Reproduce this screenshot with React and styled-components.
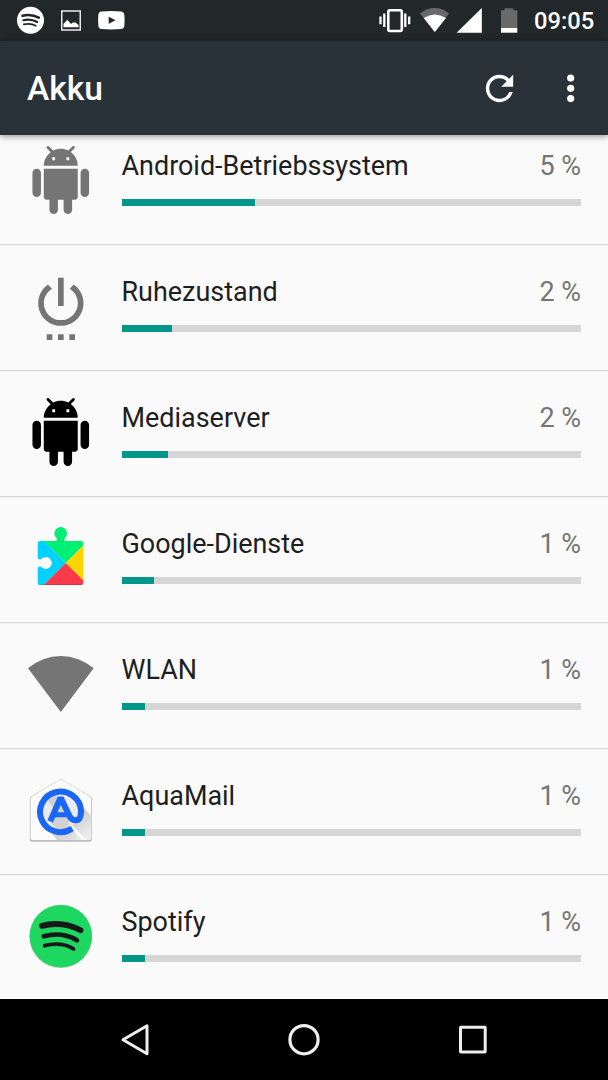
import React from 'react'
import styled, { createGlobalStyle } from 'styled-components';

const GlobalStyle = createGlobalStyle`
  body {
    margin: 0;
    background: #000;
    font-family: Roboto, "Liberation Sans", sans-serif;
  }
`;
const Screen = styled.div`
  display: flex;
  flex-direction: column;
  width: 608px;
  height: 1080px;
  overflow: hidden;
  background: #fafafa;
`;
const StatusBar = styled.div`
  display: flex;
  align-items: center;
  flex: none;
  height: 41px;
  padding: 0 14px 0 16px;
  box-sizing: border-box;
  background: #22272a;
`;
const StatusGroup = styled.div`
  display: flex;
  align-items: center;
  gap: ${props => props.gap};
`;
const Spacer = styled.div`
  flex: 1;
`;
const Icon = styled.svg`
  display: block;
  flex: none;
`;
const Clock = styled.div`
  width: 60px;
  margin-left: 16px;
  padding-top: 1px;
  color: #fff;
  font-size: 23.7px;
  font-weight: 500;
  line-height: 41px;
  white-space: nowrap;
`;
const AppBar = styled.div`
  position: relative;
  z-index: 1;
  display: flex;
  align-items: center;
  flex: none;
  height: 94px;
  padding: 0 17px 0 27px;
  box-sizing: border-box;
  background: #283238;
  box-shadow: 0 1px 7px rgba(0, 0, 0, 0.45);
`;
const Title = styled.div`
  flex: 1;
  color: #fff;
  font-size: 33.6px;
  font-weight: 500;
`;
const Actions = styled.div`
  display: flex;
  gap: 30px;
`;
const ListWindow = styled.div`
  flex: 1;
  min-height: 0;
  overflow: hidden;
`;
const List = styled.div`
  margin-top: -16px;
`;
const Row = styled.div`
  display: flex;
  height: 126px;
  padding-right: 27px;
  box-sizing: border-box;
  border-bottom: 1px solid #d6d6d6;
  box-shadow: 0 1px 0 #efefef;
`;
const Info = styled.div`
  flex: 1;
  padding-top: 28px;
`;
const Labels = styled.div`
  display: flex;
  justify-content: space-between;
  height: 52px;
  line-height: 38px;
  font-size: 26.95px;
`;
const Name = styled.div`
  color: #1e1e1e;
`;
const Percent = styled.div`
  color: #757575;
`;
const Track = styled.div`
  height: 7px;
  background: #d6d6d6;
`;
const Fill = styled.div`
  height: 100%;
  background: #009688;
`;
const NavBar = styled.div`
  display: grid;
  grid-template-columns: repeat(3, 169px);
  justify-content: center;
  justify-items: center;
  align-items: center;
  flex: none;
  height: 81px;
  background: #000;
`;

const RowIcon = ({ children }) => (
  <Icon width="121.5" height="124" viewBox="0 0 121.5 124">{children}</Icon>
);

const AndroidIcon = ({ color }) => (
  <RowIcon>
    <path
      transform="translate(26.8 27) scale(2.83)"
      fill={color}
      d="M6 18c0 .55.45 1 1 1h1v3.5c0 .83.67 1.5 1.5 1.5s1.5-.67 1.5-1.5V19h2v3.5c0 .83.67 1.5 1.5 1.5s1.5-.67 1.5-1.5V19h1c.55 0 1-.45 1-1V8H6v10zM3.5 8C2.67 8 2 8.67 2 9.5v7c0 .83.67 1.5 1.5 1.5S5 17.33 5 16.5v-7C5 8.67 4.33 8 3.5 8zm17 0c-.83 0-1.5.67-1.5 1.5v7c0 .83.67 1.5 1.5 1.5s1.5-.67 1.5-1.5v-7c0-.83-.67-1.5-1.5-1.5zm-4.97-5.84l1.3-1.3c.2-.2.2-.51 0-.71-.2-.2-.51-.2-.71 0l-1.48 1.48C13.85 1.23 12.95 1 12 1c-.96 0-1.86.23-2.66.63L7.85.15c-.2-.2-.51-.2-.71 0-.2.2-.2.51 0 .71l1.31 1.31C6.97 3.26 6 5.01 6 7h12c0-1.99-.97-3.75-2.47-4.84zM10 5H9V4h1v1zm5 0h-1V4h1v1z"
    />
  </RowIcon>
);

const PowerIcon = () => (
  <RowIcon>
    <path
      transform="translate(26.9 27) scale(2.83)"
      fill="#757575"
      d="M7 24h2v-2H7v2zm4 0h2v-2h-2v2zm2-22h-2v10h2V2zm3.56 2.44l-1.45 1.45C16.84 6.94 18 8.83 18 11c0 3.31-2.69 6-6 6s-6-2.69-6-6c0-2.17 1.16-4.06 2.88-5.12L7.44 4.44C5.36 5.88 4 8.28 4 11c0 4.42 3.58 8 8 8s8-3.58 8-8c0-2.72-1.36-5.12-3.44-6.56zM15 24h2v-2h-2v2z"
    />
  </RowIcon>
);

const PlayServicesIcon = () => (
  <RowIcon>
    <defs>
      <clipPath id="puzzle">
        <path d="M40.2 44H55.5Q58 43.6 56.6 41.2A6.3 6.3 0 1 1 64.8 41.2Q63.4 43.6 65.9 44H80.8Q83.4 44 83.4 46.5V85.5Q83.4 88 80.8 88H40.2Q37.7 88 37.7 85.500V71.5Q37.8 69.6 40 69.6Q41 69.7 42 70.6A6 6 0 1 0 42 61.4Q41 62.3 40 62.4Q37.8 62.4 37.7 60.5V46.5Q37.7 44 40.2 44Z" />
      </clipPath>
    </defs>
    <g clipPath="url(#puzzle)">
      <path fill="#00f076" d="M43.7 44L50 28H72L90 41.7 65.7 66Z" />
      <path fill="#00d2ff" d="M36 36.3L65.7 66 36 95.7Z" />
      <path fill="#ffd500" d="M65.7 66L84 47.7V84.3Z" />
      <path fill="#f93a4a" d="M65.7 66L88.7 89H42.7Z" />
      <path fill="#000" opacity="0.15" d="M37 87.3H84V88H37Z" />
    </g>
  </RowIcon>
);

const WlanIcon = () => (
  <RowIcon>
    <path fill="#757575" d="M60.8 89L28 45.3A50 50 0 0 1 93.6 45.3Z" />
  </RowIcon>
);

const AquaMailIcon = () => (
  <RowIcon>
    <defs>
      <linearGradient id="fold" gradientUnits="userSpaceOnUse" x1="54" y1="56" x2="84" y2="90">
        <stop offset="0" stopColor="#cfcfcf" />
        <stop offset="0.6" stopColor="#d2d2d2" />
        <stop offset="1" stopColor="#ededed" />
      </linearGradient>
    </defs>
    <path
      fill="#bdbdbd"
      d="M59.3 30.4Q60.8 29.6 62.3 30.4L90.2 47.2Q91.9 48.3 91.9 50.3V90.5Q91.9 92.8 89.6 92.8H32Q29.8 92.8 29.8 90.5V50.3Q29.8 48.3 31.5 47.2Z"
    />
    <path
      fill="#fcfcfc"
      d="M59.5 30.8Q60.8 30.1 62.1 30.8L89.6 47.6Q91.1 48.5 91.1 50.3V89.3Q91.1 91 89.4 91H32.2Q30.6 91 30.6 89.3V50.3Q30.6 48.5 32.1 47.6Z"
    />
    <path fill="url(#fold)" d="M80 54L91.1 67V89.3Q91.1 91 89.4 91H86.6L72 76Z" />
    <path fill="url(#fold)" d="M47 79L60 72 71 79 82 91H57Z" />
    <circle cx="60.5" cy="62.5" r="18.500" fill="#ebebeb" />
    <path fill="url(#fold)" d="M47 50L53 45.500 60.600 50 70 71 67 80 60 81.500 50.500 74 57 64Z" />
    <path
      fill="none"
      stroke="#1a66f5"
      strokeWidth="6"
      d="M72.2 79.6A20.500 20.300 0 1 1 81 61.500C81 67.500 80 71.200 76 71.200C72.600 71.200 70.800 69.800 69.600 67.200L61.600 50.600H59.800L50.200 72.400"
    />
    <path fill="#1a66f5" d="M55 63.300H67L69 68.200H53Z" />
  </RowIcon>
);

const SpotifyIcon = () => (
  <RowIcon>
    <circle cx="60.8" cy="61.7" r="31.4" fill="#b9c7bd" />
    <circle cx="60.8" cy="61.1" r="31.2" fill="#1ed760" />
    <g fill="none" stroke="#15191a" strokeLinecap="round">
      <path strokeWidth="5.800" d="M42 50.9C55 47.2 69.5 49 80.5 55.3" />
      <path strokeWidth="4.800" d="M43.9 61.2C55 58 67.500 59.5 76.9 65.2" />
      <path strokeWidth="3.8" d="M44.7 70.7C54.5 68.3 65.5 69 73.5 73.9" />
    </g>
  </RowIcon>
);

const rows = [
  { name: 'Android-Betriebssystem', percent: '5 %', fill: 29, icon: <AndroidIcon color="#757575" /> },
  { name: 'Ruhezustand', percent: '2 %', fill: 11, icon: <PowerIcon /> },
  { name: 'Mediaserver', percent: '2 %', fill: 10.1, icon: <AndroidIcon color="#000" /> },
  { name: 'Google-Dienste', percent: '1 %', fill: 7.05, icon: <PlayServicesIcon /> },
  { name: 'WLAN', percent: '1 %', fill: 5.05, icon: <WlanIcon /> },
  { name: 'AquaMail', percent: '1 %', fill: 5.05, icon: <AquaMailIcon /> },
  { name: 'Spotify', percent: '1 %', fill: 5.05, icon: <SpotifyIcon /> },
];

const Notifications = () => (
  <StatusGroup gap="16px">
    <Icon width="29" height="41" viewBox="0 0 29 41">
      <circle cx="14.5" cy="20.3" r="13.5" fill="#fff" />
      <g fill="none" stroke="#22272a" strokeLinecap="round">
        <path strokeWidth="2.5" d="M6.5 15.8C12 14.3 18 15 22.8 17.7" />
        <path strokeWidth="2.1" d="M7.3 20.3C12 19 17 19.6 21.2 22" />
        <path strokeWidth="1.7" d="M7.8 24.4C12 23.4 16.4 23.7 19.8 25.8" />
      </g>
    </Icon>
    <Icon width="20" height="41" viewBox="0 0 20 41">
      <path fill="none" stroke="#e8e9e9" strokeWidth="1.5" d="M.75 10.9H19.25V29.9H.75Z" />
      <path fill="#fff" d="M2.5 27.3V24L6.3 19.8 10 24 12 22.5H14.5L17.5 25V27.3Z" />
    </Icon>
    <Icon width="30" height="41" viewBox="0 0 30 41">
      <path
        fill="#fff"
        d="M4.5 11.4Q14.2 10.6 24 11.4Q27 11.7 27.4 15Q27.8 20.3 27.4 25.6Q27 28.8 24 29.1Q14.2 29.9 4.5 29.1Q1.5 28.8 1.3 25.6Q.9 20.3 1.3 15Q1.5 11.7 4.5 11.4Z"
      />
      <path fill="#22272a" d="M11.7 16.7V23.8L18.6 20.2Z" />
    </Icon>
  </StatusGroup>
);

const SystemIcons = () => (
  <StatusGroup gap="7px">
    <Icon width="33" height="41" viewBox="0 0 33 41">
      <rect x="9.3" y="10.2" width="13.500" height="20.800" rx="1.5" fill="none" stroke="#fff" strokeWidth="2.6" />
      <path fill="none" stroke="#fff" strokeWidth="2.3" d="M1.5 16.5V24.2M5.3 13.5V27M26.300 13.5V27M30.200 16.5V24.2" />
    </Icon>
    <Icon width="30" height="41" viewBox="0 0 30 41">
      <path fill="#67696b" d="M15.800 32L1 13.5Q15.800 2.7 30 13.5Z" />
      <path fill="#fff" d="M15.800 32L4.800 18Q15.800 10.8 27 18Z" />
    </Icon>
    <Icon width="26" height="41" viewBox="0 0 26 41">
      <path fill="#fff" d="M.6 32.8L25.8 8V32.8Z" />
    </Icon>
    <Icon width="29" height="41" viewBox="0 0 29 41">
      <path fill="#67696b" d="M12 10.3H15.5V8.300H24.300V10.3H28.3V28H12Z" />
      <path fill="#fff" d="M12 28H28.300V32.700H12Z" />
    </Icon>
  </StatusGroup>
);

const App = () => {
  return (
    <Screen>
      <GlobalStyle />
      <StatusBar>
        <Notifications />
        <Spacer />
        <SystemIcons />
        <Clock>09:05</Clock>
      </StatusBar>
      <AppBar>
        <Title>Akku</Title>
        <Actions>
          <Icon width="41" height="41" viewBox="0 0 24 24">
            <path
              fill="#fff"
              d="M17.65 6.35C16.2 4.9 14.21 4 12 4c-4.42 0-7.99 3.58-7.99 8s3.57 8 7.99 8c3.73 0 6.84-2.55 7.73-6h-2.08c-.82 2.33-3.04 4-5.65 4-3.31 0-6-2.69-6-6s2.69-6 6-6c1.66 0 3.14.69 4.22 1.78L13 11h7V4l-2.35 2.35z"
            />
          </Icon>
          <Icon width="41" height="41" viewBox="0 0 24 24" fill="#fff">
            <circle cx="12.1" cy="5.9" r="2.1" />
            <circle cx="12.1" cy="11.9" r="2.1" />
            <circle cx="12.1" cy="17.9" r="2.1" />
          </Icon>
        </Actions>
      </AppBar>
      <ListWindow>
        <List>
          {rows.map(row => (
            <Row key={row.name}>
              {row.icon}
              <Info>
                <Labels>
                  <Name>{row.name}</Name>
                  <Percent>{row.percent}</Percent>
                </Labels>
                <Track>
                  <Fill style={{ width: `${row.fill}%` }} />
                </Track>
              </Info>
            </Row>
          ))}
        </List>
      </ListWindow>
      <NavBar>
        <Icon width="34" height="34" viewBox="0 0 34 34">
          <path fill="none" stroke="#eee" strokeWidth="3" strokeLinejoin="round" d="M5 16.7L29 2.7V30.7Z" />
        </Icon>
        <Icon width="34" height="34" viewBox="0 0 34 34">
          <circle cx="17" cy="16.7" r="14.1" fill="none" stroke="#eee" strokeWidth="3.2" />
        </Icon>
        <Icon width="34" height="34" viewBox="0 0 34 34">
          <rect x="4.5" y="4.2" width="24.7" height="24.7" rx="0.5" fill="none" stroke="#eee" strokeWidth="3" />
        </Icon>
      </NavBar>
    </Screen>
  )
}

export default App;
